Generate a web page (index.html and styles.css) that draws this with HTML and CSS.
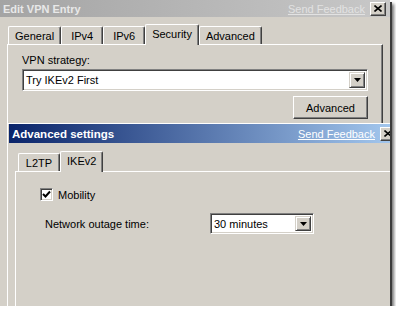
FILE: index.html
```html
<!DOCTYPE html>
<html lang="en">
<head>
    <meta charset="UTF-8">
    <title>Edit VPN Entry</title>
    <link rel="stylesheet" href="styles.css">
</head>
<body>

<div class="screen">
    <!-- main dialog -->
    <div class="dialog">
        <div class="titlebar">
            <span class="title">Edit VPN Entry</span>
            <span class="feedback">Send Feedback</span>
            <span class="close-btn">
                <svg width="8" height="7" viewBox="0 0 8 7"><path d="M0.5 0.5 L7.5 6.5 M7.5 0.5 L0.5 6.5" stroke="#000" stroke-width="1.6"/></svg>
            </span>
        </div>

        <div class="tabs main-tabs">
            <span class="tab">General</span>
            <span class="tab">IPv4</span>
            <span class="tab">IPv6</span>
            <span class="tab active">Security</span>
            <span class="tab">Advanced</span>
        </div>

        <div class="panel main-panel">
            <div class="field-label">VPN strategy:</div>
            <div class="combo wide">
                <span class="combo-text">Try IKEv2 First</span>
                <span class="drop"><svg width="7" height="4" viewBox="0 0 7 4"><path d="M0 0h7l-3.5 4z" fill="#000"/></svg></span>
            </div>
            <div class="btn-row">
                <button class="btn">Advanced</button>
            </div>
        </div>
    </div>

    <!-- advanced settings window, lies over the dialog -->
    <div class="subwindow">
        <div class="caption">
            <span class="caption-title">Advanced settings</span>
            <span class="caption-feedback">Send Feedback</span>
            <span class="close-btn">
                <svg width="8" height="7" viewBox="0 0 8 7"><path d="M0.5 0.5 L7.5 6.5 M7.5 0.5 L0.5 6.5" stroke="#000" stroke-width="1.6"/></svg>
            </span>
        </div>
        <div class="subbody">
            <div class="tabs sub-tabs">
                <span class="tab">L2TP</span>
                <span class="tab active">IKEv2</span>
            </div>
            <div class="panel sub-panel">
                <label class="check-row">
                    <span class="checkbox">
                        <svg width="9" height="9" viewBox="0 0 9 9"><path d="M1 4 L3.5 6.5 L8 1.5" stroke="#000" stroke-width="2" fill="none"/></svg>
                    </span>
                    Mobility
                </label>
                <div class="outage-row">
                    <span class="outage-label">Network outage time:</span>
                    <div class="combo small">
                        <span class="combo-text">30 minutes</span>
                        <span class="drop"><svg width="7" height="4" viewBox="0 0 7 4"><path d="M0 0h7l-3.5 4z" fill="#000"/></svg></span>
                    </div>
                </div>
            </div>
        </div>
    </div>
</div>

</body>
</html>
```

FILE: styles.css
```css
body {
    margin: 0;
    background-color: #fff;
    font-family: "Liberation Sans", Arial, sans-serif;
    font-size: 11px;
    color: #000;
}
.screen {
    width: 390px;
    height: 306px;
    overflow: hidden;
    background-color: #d4d0c8;
    box-shadow: 2px 2px 0 #3c3c3c, 4px 4px 3px rgba(0, 0, 0, 0.55);
    display: flex;
    flex-direction: column;
}
.dialog {
    height: 123px;
    display: flex;
    flex-direction: column;
    flex-shrink: 0;
}
.titlebar {
    height: 17px;
    display: flex;
    align-items: center;
    padding: 0 4px 0 3px;
    background: linear-gradient(to right, #a4a4a4, #c8c8c8);
}
.title {
    flex: 1;
    font-weight: bold;
    color: #e8e8e8;
}
.feedback {
    color: #e2e2e2;
    text-decoration: underline;
    margin-right: 5px;
}
.close-btn {
    width: 16px;
    height: 14px;
    box-sizing: border-box;
    display: flex;
    align-items: center;
    justify-content: center;
    background-color: #d4d0c8;
    border: 1px solid;
    border-color: #fff #404040 #404040 #fff;
    box-shadow: inset -1px -1px #808080;
}

/* tabs */
.tabs {
    display: flex;
    align-items: flex-end;
    height: 20px;
}
.main-tabs {
    margin: 7px 0 0 8px;
}
.tab {
    height: 18px;
    min-width: 42px;
    padding: 0 6px;
    box-sizing: border-box;
    display: flex;
    align-items: center;
    justify-content: center;
    border-top: 1px solid #fff;
    border-left: 1px solid #fff;
    border-right: 1px solid #404040;
    border-radius: 2px 2px 0 0;
    box-shadow: inset -1px 0 #808080;
    background-color: #d4d0c8;
}
.tab.active {
    height: 21px;
    margin-bottom: -1px;
    padding-bottom: 2px;
    position: relative;
    z-index: 1;
}

/* panels */
.panel {
    border-top: 1px solid #fff;
    border-left: 1px solid #fff;
    border-right: 1px solid #404040;
    box-shadow: inset -1px 0 #808080;
    box-sizing: border-box;
}
.main-panel {
    flex: 1;
    margin-left: 7px;
    width: 376px;
    padding: 9px 0 0 14px;
}
.field-label {
    line-height: 13px;
    margin-bottom: 2px;
}
.combo {
    display: flex;
    align-items: center;
    background-color: #fff;
    box-sizing: border-box;
    border: 1px solid;
    border-color: #808080 #fff #fff #808080;
    box-shadow: inset 1px 1px #404040, inset -1px -1px #d4d0c8;
    padding: 2px;
}
.combo.wide {
    width: 346px;
    height: 22px;
}
.combo.small {
    width: 104px;
    height: 21px;
}
.combo-text {
    flex: 1;
    padding-left: 1px;
}
.drop {
    width: 16px;
    align-self: stretch;
    box-sizing: border-box;
    display: flex;
    align-items: center;
    justify-content: center;
    background-color: #d4d0c8;
    border: 1px solid;
    border-color: #d4d0c8 #404040 #404040 #d4d0c8;
    box-shadow: inset 1px 1px #fff, inset -1px -1px #808080;
}
.btn-row {
    width: 346px;
    display: flex;
    justify-content: flex-end;
    margin-top: 5px;
}
.btn {
    width: 75px;
    height: 23px;
    font-family: inherit;
    font-size: 11px;
    color: #000;
    background-color: #d4d0c8;
    border: 1px solid;
    border-color: #fff #404040 #404040 #fff;
    box-shadow: inset -1px -1px #808080;
    padding: 0;
}

/* advanced settings window */
.subwindow {
    flex: 1;
    width: 392px;
    margin-left: 7px;
    box-sizing: border-box;
    border-top: 1px solid #fff;
    border-left: 1px solid #fff;
    padding-left: 1px;
    display: flex;
    flex-direction: column;
}
.caption {
    height: 19px;
    display: flex;
    align-items: center;
    padding: 0 3px 0 3px;
    background: linear-gradient(to right, #0a246a, #a6caf0);
}
.caption-title {
    flex: 1;
    font-weight: bold;
    font-size: 11.5px;
    color: #fff;
}
.caption-feedback {
    color: #fff;
    text-decoration: underline;
    margin-right: 5px;
}
.subbody {
    flex: 1;
    display: flex;
    flex-direction: column;
}
.sub-tabs {
    margin: 8px 0 0 9px;
}
.sub-panel {
    flex: 1;
    margin-left: 6px;
    width: 377px;
    padding: 16px 0 0 24px;
}
.check-row {
    display: flex;
    align-items: center;
    gap: 5px;
    height: 13px;
}
.checkbox {
    width: 13px;
    height: 13px;
    box-sizing: border-box;
    display: flex;
    align-items: center;
    justify-content: center;
    background-color: #fff;
    border: 1px solid;
    border-color: #808080 #fff #fff #808080;
    box-shadow: inset 1px 1px #404040, inset -1px -1px #d4d0c8;
}
.outage-row {
    display: flex;
    align-items: center;
    margin: 12px 0 0 5px;
}
.outage-label {
    width: 165px;
}
```
